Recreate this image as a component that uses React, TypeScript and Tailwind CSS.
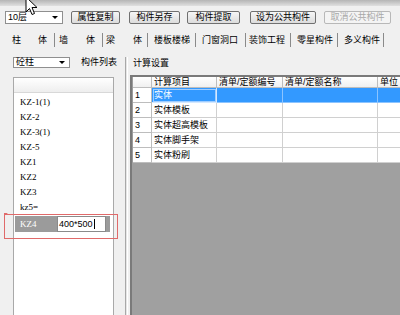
import React from "react";

const cols = ["w-[19px]", "w-[65px]", "w-[66px]", "w-[95px]", "w-[60px]"];

function Btn({ label, w, ml, disabled }: { label: string; w: string; ml: string; disabled?: boolean }) {
  return (
    <div
      className={`${w} ${ml} h-[13px] shrink-0 flex items-center justify-center rounded-[2px] border ${
        disabled
          ? "border-[#b8b8b8] bg-[#f4f4f4] text-[#a8a8a8]"
          : "border-[#707070] bg-gradient-to-b from-[#f6f6f6] to-[#dcdcdc] text-black"
      }`}
    >
      {label}
    </div>
  );
}

function Arrow() {
  return <span className="w-0 h-0 border-l-[3px] border-r-[3px] border-t-[3px] border-l-transparent border-r-transparent border-t-black" />;
}

function Tab({ w, children }: { w: string; children: React.ReactNode }) {
  return <div className={`${w} h-[14px] shrink-0 flex items-center border-r border-[#8a8a8a]`}>{children}</div>;
}

const items = ["KZ-1(1)", "KZ-2", "KZ-3(1)", "KZ-5", "KZ1", "KZ2", "KZ3", "kz5="];
const calc = ["实体", "实体模板", "实体超高模板", "实体脚手架", "实体粉刷"];

export default function App() {
  return (
    <div className="relative w-[400px] h-[315px] overflow-hidden bg-[#f0f0f0] text-[9px] leading-none text-black font-['Liberation_Sans','Noto_Sans_CJK_SC',sans-serif] flex flex-col">
      <div className="h-[6px] shrink-0 bg-gradient-to-b from-[#b5b5b5] to-[#e0e0e0]" />

      {/* toolbar */}
      <div className="flex items-center h-[13px] mt-[5px] shrink-0">
        <div className="ml-[5px] w-[58px] h-[13px] shrink-0 bg-white border border-[#8f8f8f] flex items-center justify-between pl-[2px] pr-[4px]">
          <span>10层</span>
          <Arrow />
        </div>
        <Btn label="属性复制" w="w-[49px]" ml="ml-[8px]" />
        <Btn label="构件另存" w="w-[51px]" ml="ml-[9px]" />
        <Btn label="构件提取" w="w-[53px]" ml="ml-[7px]" />
        <Btn label="设为公共构件" w="w-[66px]" ml="ml-[10px]" />
        <Btn label="取消公共构件" w="w-[67px]" ml="ml-[8px]" disabled />
      </div>

      {/* tabs */}
      <div className="flex items-center h-[14px] mt-[9px] shrink-0">
        <Tab w="w-[55px]">
          <span className="ml-[12px]">柱</span>
          <span className="ml-[17px]">体</span>
        </Tab>
        <Tab w="w-[48px]">
          <span className="ml-[4px]">墙</span>
          <span className="ml-[18px]">体</span>
        </Tab>
        <Tab w="w-[45px]">
          <span className="ml-[3px]">梁</span>
          <span className="ml-[18px]">体</span>
        </Tab>
        <Tab w="w-[48px]">
          <span className="ml-[6px]">楼板楼梯</span>
        </Tab>
        <Tab w="w-[50px]">
          <span className="ml-[6px]">门窗洞口</span>
        </Tab>
        <Tab w="w-[45px]">
          <span className="ml-[3px]">装饰工程</span>
        </Tab>
        <Tab w="w-[47px]">
          <span className="ml-[6px]">零星构件</span>
        </Tab>
        <Tab w="w-[46px]">
          <span className="ml-[6px]">多义构件</span>
        </Tab>
      </div>

      <div className="flex flex-1 min-h-0 mt-[7px]">
        {/* left panel */}
        <div className="w-[125px] shrink-0 flex flex-col">
          <div className="h-[23px] shrink-0 flex items-start pt-[3px]">
            <div className="ml-[13px] w-[57px] h-[11px] bg-white border border-[#8f8f8f] flex items-center justify-between pl-[2px] pr-[4px]">
              <span>砼柱</span>
              <Arrow />
            </div>
            <span className="ml-[11px] mt-[1px]">构件列表</span>
          </div>
          <div className="ml-[13px] w-[101px] flex-1 bg-white border-l border-t border-r border-[#a9a9a9]">
            <div className="h-[15px] bg-gradient-to-b from-white to-[#eeeeee] border-b border-[#d8d8d8]" />
            <div className="pt-[2px]">
              {items.map((it) => (
                <div key={it} className="h-[15px] flex items-center pl-[6px] font-['Liberation_Serif',serif] text-[9px]">
                  {it}
                </div>
              ))}
              <div className="ml-[1px] mt-[1px] w-[95px] h-[16px] flex items-center bg-[#9b9b9b]">
                <span className="w-[42px] pl-[5px] text-white font-['Liberation_Serif',serif]">KZ4</span>
                <div className="w-[49px] h-[16px] bg-white border border-[#8a8a8a] flex items-center pl-[1px]">
                  <span>400*500</span>
                  <span className="ml-[1px] w-px h-[10px] bg-black" />
                </div>
              </div>
            </div>
          </div>
        </div>

        {/* splitter */}
        <div className="mt-[3px] w-[3px] shrink-0 border-l border-[#a8a8a8] border-r border-r-white bg-[#e6e6e6]" />

        {/* right panel */}
        <div className="flex-1 min-w-0 flex flex-col">
          <div className="h-[18px] shrink-0 flex items-center pl-[5px]">计算设置</div>
          <div className="mt-[3px] ml-[2px] flex-1 bg-[#a0a0a0] border-l-2 border-t-2 border-[#7a7a7a] overflow-hidden">
            <div className="w-[310px] border-l border-[#9c9c9c]">
              <div className="flex h-[11px] bg-gradient-to-b from-white to-[#eeeeee]">
                {["", "计算项目", "清单/定额编号", "清单/定额名称", "单位"].map((h, i) => (
                  <div key={i} className={`${cols[i]} shrink-0 h-full flex items-center pl-[2px] border-r border-b border-[#bdbdbd] whitespace-nowrap overflow-hidden`}>
                    {h}
                  </div>
                ))}
              </div>
              {calc.map((c, r) => {
                const sel = r === 0;
                return (
                  <div key={c} className="flex h-[15px]">
                    <div className={`${cols[0]} shrink-0 h-full flex items-center pl-[2px] bg-white border-r border-b border-[#bdbdbd]`}>
                      {r + 1}
                    </div>
                    <div
                      className={`${cols[1]} shrink-0 h-full flex items-center pl-[2px] border-r border-b ${
                        sel ? "bg-[#3399ff] text-white border-[#d4e8ff] outline outline-1 -outline-offset-2 outline-[#9fcdff]" : "bg-white border-[#d0d0d0]"
                      }`}
                    >
                      {c}
                    </div>
                    {[2, 3, 4].map((k) => (
                      <div
                        key={k}
                        className={`${cols[k]} shrink-0 h-full border-r border-b ${
                          sel ? "bg-[#3399ff] border-[#8cc4ff]" : "bg-white border-[#d0d0d0]"
                        }`}
                      />
                    ))}
                  </div>
                );
              })}
            </div>
          </div>
        </div>
      </div>

      {/* annotation box */}
      <div className="absolute left-[4px] top-[214px] w-[114px] h-[25px] border border-[#e06a6a]" />
      <div className="absolute left-[4px] top-[213px] w-0 h-0 border-l-[4px] border-b-[3px] border-l-[#e06a6a] border-b-transparent" />

      {/* mouse cursor */}
      <svg className="absolute left-[25px] top-[-4px]" width="13" height="20" viewBox="0 0 13 20">
        <path d="M1 1 L1 16 L4.5 12.5 L7 18.5 L9.5 17.5 L7 11.5 L12 11.5 Z" fill="white" stroke="black" strokeWidth="1" strokeLinejoin="round" />
      </svg>
    </div>
  );
}
